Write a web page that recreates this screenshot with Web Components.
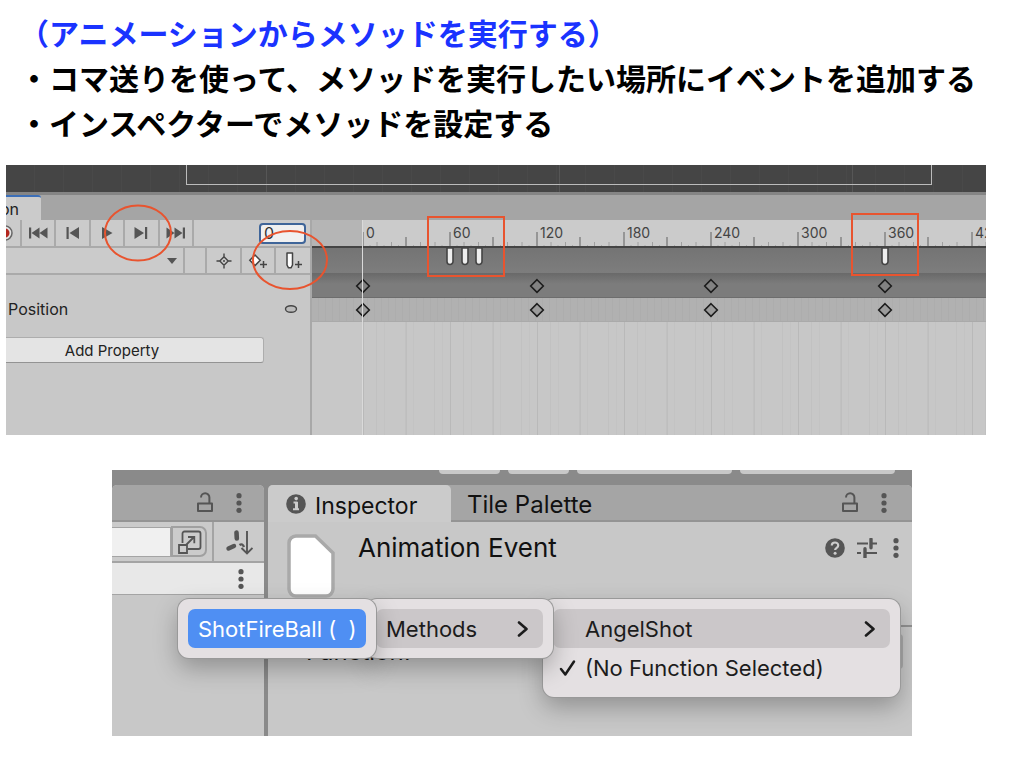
<!DOCTYPE html>
<html lang="ja">
<head>
<meta charset="utf-8">
<title>アニメーションからメソッドを実行する</title>
<style>
  body { margin: 0; background: #fff; color: #000; font-family: Inter, "Noto Sans CJK JP", sans-serif; }
</style>
</head>
<body>
<lesson-slide>
  <lesson-notes>
    <h1 slot="title">（アニメーションからメソッドを実行する）</h1>
    <p>・コマ送りを使って、メソッドを実行したい場所にイベントを追加する</p>
    <p>・インスペクターでメソッドを設定する</p>
  </lesson-notes>
  <animation-window></animation-window>
  <inspector-window></inspector-window>
</lesson-slide>

<script>
const define = (name, html, init) => {
  const template = document.createElement('template');
  template.innerHTML = html;
  customElements.define(name, class extends HTMLElement {
    constructor() {
      super();
      this.attachShadow({ mode: 'open' }).append(template.content.cloneNode(true));
    }
    connectedCallback() { if (init) init(this, this.shadowRoot); }
  });
};

/* Icon set: [width, height, markup] */
const G = '#555';
const icons = {
  record: [14, 18, '<circle cx="-1" cy="9" r="7" fill="#e4e4e4" stroke="#666" stroke-width="1.500"/><circle cx="-1" cy="9" r="4.500" fill="#b3261e"/>'],
  first: [20, 14, `<path d="M1 1.500h2.200v11H1zM3.500 7l8-5.500v11zM11.500 7l8-5.500v11z" fill="${G}"/>`],
  prev: [16, 14, `<path d="M1.500 1h2.200v12H1.500zM4.500 7l9.500-6v12z" fill="${G}"/>`],
  play: [14, 14, `<path d="M2 1l10.500 6L2 13z" fill="${G}"/>`],
  next: [16, 14, `<path d="M1.500 1L11 7l-9.500 6zM12 1h2.200v12H12z" fill="${G}"/>`],
  last: [20, 14, `<path d="M.5 1.500l8 5.500-8 5.500zM8.500 1.500l8 5.500-8 5.500zM16.800 1.500H19v11h-2.200z" fill="${G}"/>`],
  caret: [10, 6, `<path d="M0 0h10L5 6z" fill="${G}"/>`],
  target: [16, 16, '<path d="M8 3.800L12.200 8 8 12.200 3.800 8zM8 .5v4M8 11.500v4M.5 8h4M11.500 8h4" fill="none" stroke="#444" stroke-width="1.400"/><circle cx="8" cy="8" r="1" fill="#444"/>'],
  addkey: [20, 18, '<path d="M7 3l5.200 5.300L7 13.600 1.800 8.300z" fill="#fff" stroke="#444" stroke-width="1.500"/><path d="M15.500 9v7M12 12.500h7" fill="none" stroke="#444" stroke-width="1.500"/>'],
  addevent: [18, 18, '<path d="M3 1h5.500v12L7 15.800H4.500L3 13z" fill="#fff" stroke="#444" stroke-width="1.500" stroke-linejoin="round"/><path d="M14.500 9v7M11 12.500h7" fill="none" stroke="#444" stroke-width="1.500"/>'],
  curve: [14, 10, '<ellipse cx="7" cy="5" rx="5.500" ry="3.300" fill="#bbb" stroke="#444" stroke-width="1.400"/>'],
  diamond: [16, 16, '<path d="M8 1.700L14.300 8 8 14.300 1.700 8z" fill="#888" fill-opacity=".5" stroke="#1c1c1c" stroke-width="1.600"/>'],
  marker: [8, 18, '<path d="M1 0v13.500a3 3 0 0 0 6 0V0z" fill="#eee" stroke="#444" stroke-width="1.600"/>'],
  lock: [18, 22, `<path d="M2 11.500h14v7.500H2z" fill="none" stroke="${G}" stroke-width="2" stroke-linejoin="round"/><path d="M5 5.500a4.200 4.200 0 0 1 8.400 0v6" fill="none" stroke="${G}" stroke-width="2"/>`],
  kebab: [6, 20, `<g fill="${G}"><circle cx="3" cy="2.700" r="2.600"/><circle cx="3" cy="10" r="2.600"/><circle cx="3" cy="17.300" r="2.600"/></g>`],
  info: [20, 20, `<circle cx="10" cy="10" r="9.800" fill="${G}"/><path d="M7.500 8.500h3v6.500M7 15.200h6" fill="none" stroke="#ccc" stroke-width="2"/><path d="M10.500 8v7" stroke="#ccc" stroke-width="3"/><circle cx="10.200" cy="4.600" r="1.800" fill="#ccc"/>`],
  help: [20, 20, `<circle cx="10" cy="10" r="9.800" fill="${G}"/><path d="M6.800 7.600C6.800 3.400 13.300 3.600 13.200 7.400c0 2.500-3.100 2.300-3.100 4.700" fill="none" stroke="#ccc" stroke-width="2.200"/><circle cx="10.100" cy="15.200" r="1.500" fill="#ccc"/>`],
  sliders: [20, 20, `<path d="M0 5.500h11M14 5.500h6M0 15h4M8.500 15H20" stroke="${G}" stroke-width="1.800"/><path d="M14 1.200v8.600M8 10.800v8.600" stroke="${G}" stroke-width="3.400" stroke-linecap="round"/>`],
  window: [26, 26, `<path d="M6.500 14V4.500a2 2 0 0 1 2-2h14a2 2 0 0 1 2 2V18a2 2 0 0 1-2 2H12" fill="none" stroke="${G}" stroke-width="1.800"/><path d="M3 16h8v8H3zM10 16l8-8M12 8h6.300v6.300" fill="none" stroke="${G}" stroke-width="1.800"/>`],
  sort: [28, 26, `<path d="M11.500 3.500l.3 6" stroke="${G}" stroke-width="4.600" stroke-linecap="round"/><path d="M3.500 19.500l5.500-2.500" stroke="${G}" stroke-width="4.400" stroke-linecap="round"/><path d="M14.500 16q3-2 4.500 2" fill="none" stroke="${G}" stroke-width="2.400"/><path d="M22 2v22M16.500 19l5.500 5.500L27.500 19" fill="none" stroke="${G}" stroke-width="1.900"/>`],
  file: [48, 64, '<path d="M9 2h19.500L46 19v36a7 7 0 0 1-7 7H9a7 7 0 0 1-7-7V9a7 7 0 0 1 7-7z" fill="#fff" stroke="#a9a9a9" stroke-width="3.500"/>'],
  chevron: [12, 16, '<path d="M2 1.500L9.500 8 2 14.500" fill="none" stroke="#1c1c1c" stroke-width="2.600" stroke-linecap="round" stroke-linejoin="round"/>'],
  check: [18, 18, '<path d="M2 10l4.300 5.500L15 2.500" fill="none" stroke="#1c1c1c" stroke-width="2.500" stroke-linecap="round" stroke-linejoin="round"/>']
};
define('ui-icon', '', (host, root) => {
  const [w, h, body] = icons[host.getAttribute('name')];
  root.innerHTML = `<style>:host{display:block;flex:none;white-space:normal}svg{display:block}</style><svg width="${w}" height="${h}" viewBox="0 0 ${w} ${h}" aria-hidden="true">${body}</svg>`;
});

define('lesson-slide', `
<style>:host{display:flex;flex-direction:column;padding-top:10px}</style><slot></slot>`);

define('lesson-notes', `
<style>
  :host{display:block;padding-left:19px;font-family:"Noto Sans CJK JP",sans-serif;font-weight:700;white-space:nowrap}
  ::slotted(*){margin:0;font-size:30px;line-height:45px;font-weight:700}
  ::slotted(h1){color:#1a33ff}
</style>
<slot name="title"></slot><slot></slot>`);

define('icon-button', `
<style>
  :host{display:grid;min-width:0}
  button{display:grid;place-items:center;border:0;padding:0;margin:0;background:none;min-width:0;overflow:hidden;color:inherit}
  :host([divided]) button{border-right:2px solid #aaa}
</style>
<button type="button"></button>`, (host, root) => {
  const b = root.querySelector('button');
  b.setAttribute('aria-label', host.getAttribute('label'));
  b.innerHTML = `<ui-icon name="${host.getAttribute('icon')}"></ui-icon>`;
});

/* One 60-frame span of the ruler, with its ticks */
define('ruler-span', `
<style>
  :host{display:grid;width:87px;flex:none;color:#444;font-size:14px;line-height:26px}
  svg,span{grid-area:1/1}
  span{padding-left:4px}
</style>
<svg width="87" height="27" aria-hidden="true"><g stroke="#858585">
<path d="M1 12v15M44 17v10" stroke-width="1.500"/>
<path d="M15 22v5M29.500 22v5M58.500 22v5M73 22v5" stroke="#a0a0a0"/>
<path d="M8 25v2M22 25v2M36.500 25v2M51.500 25v2M65.500 25v2M80 25v2" stroke="#aaa"/></g></svg>
<span><slot></slot></span>`);

/* A track row: pins sit at their frame on the time axis */
define('time-track', `
<style>
  :host{display:block;position:relative;box-sizing:border-box;overflow:hidden}
  ui-icon{position:absolute;top:var(--pin-top,4px);left:calc(51px + var(--frame) * 87px / 60);transform:translateX(-50%)}
</style>`, (host, root) => {
  for (const f of host.getAttribute('frames').split(' ')) {
    const i = document.createElement('ui-icon');
    i.setAttribute('name', host.getAttribute('pin'));
    i.style.setProperty('--frame', f);
    root.append(i);
  }
});

define('animation-window', `
<style>
  :host{display:block;position:relative;margin:20px 38px 0 6px;height:270px;overflow:hidden;background:#c8c8c8;color:#222;font-size:16px}
  .scene{height:27px;overflow:hidden;background:
    repeating-linear-gradient(90deg,transparent 0 260px,#565656 260px 261px,transparent 261px 293px),
    repeating-linear-gradient(90deg,transparent 0 28px,#494949 28px 29px),#454545}
  .frame{height:19px;margin:0 54px 0 180px;border:1px solid #bbb;border-top:0}
  .tabs{height:25px;border-top:3px solid #858585;background:#a5a5a5;display:flex}
  .tab{box-sizing:border-box;width:35px;border-top:2px solid #3c6fb8;border-radius:0 3px 0 0;background:#cbcbcb;line-height:24px;display:flex;justify-content:flex-end;padding-right:22px;font-size:16px}
  .main{display:grid;grid-template-columns:306px 1fr;height:215px}
  .side{border-right:2px solid #a8a8a8;display:flex;flex-direction:column;min-width:0}
  .play{display:flex;height:26px;border-bottom:2px solid #aaa;background:#cbcbcb;align-items:center}
  .keys{display:grid;grid-template-columns:16px repeat(5,1fr);width:188px;height:26px}
  .play input{box-sizing:border-box;width:47px;height:21px;margin:0 4px 0 auto;border:2px solid #3f6599;border-radius:4px;background:#f0f0f0;padding:0 3px;font:16px Inter,sans-serif;color:#333}
  .clip{display:grid;grid-template-columns:1fr 22px 35px 34px 34px;height:25px;border-bottom:2px solid #aaa;background:#cbcbcb}
  .pick{display:grid;align-items:center;border-right:2px solid #aaa}
  .pick select{grid-area:1/1;appearance:none;border:0;background:none;height:25px}
  .pick ui-icon{grid-area:1/1;justify-self:end;margin-right:6px;pointer-events:none}
  .gap{border-right:2px solid #aaa}
  .prop{display:flex;align-items:center;justify-content:space-between;margin-top:22px;height:24px;padding:0 12px 0 2px;font-size:16px}
  .add{margin:16px 46px 0 -4px;height:26px;border:1px solid #adadad;border-bottom-color:#939393;border-radius:3px;background:#e4e4e4;color:#222;font:15px Inter,sans-serif;padding:0 42px 0 0}
  .time{position:relative;display:flex;flex-direction:column;min-width:0;overflow:hidden}
  .ruler{display:flex;height:26px;background:#cbcbcb;border-bottom:2px solid #444;overflow:hidden}
  .lead{width:50px;flex:none;background:#b5b5b5}
  .events{height:25px;--pin-top:0px;background:linear-gradient(#747474,#7d7d7d)}
  .summary{height:25px;--pin-top:5px;background:linear-gradient(#696969,#7c7c7c 45%);border-bottom:1px solid #6d6d6d}
  .position{height:24px;border-bottom:1px solid #aaa;background:repeating-linear-gradient(90deg,transparent 0 6px,#adadad 6px 7px),#b1b1b1}
  .sheet{flex:1;display:flex;background:#c8c8c8}
  .sheet i{flex:1;margin-left:51px;background:
    repeating-linear-gradient(90deg,#b9b9b9 0 1px,transparent 1px 87px),
    repeating-linear-gradient(90deg,transparent 0 43px,#bebebe 43px 44px,transparent 44px 87px),
    repeating-linear-gradient(90deg,#c7c7c7 0 13px,#c1c1c1 13px 14px,#c7c7c7 14px 21px,#c3c3c3 21px 22px,#c7c7c7 22px 29px)}
  .head{position:absolute;left:50px;top:0;bottom:0;width:1px;background:#dadada}
  .marks{position:absolute;inset:0;width:100%;height:100%;pointer-events:none}
</style>
<div class="scene"><div class="frame"></div></div>
<div class="tabs"><div class="tab">on</div></div>
<div class="main">
  <div class="side">
    <div class="play">
      <div class="keys">
        <icon-button divided icon="record" label="Record"></icon-button>
        <icon-button divided icon="first" label="First frame"></icon-button>
        <icon-button divided icon="prev" label="Previous frame"></icon-button>
        <icon-button divided icon="play" label="Play"></icon-button>
        <icon-button divided icon="next" label="Next frame"></icon-button>
        <icon-button divided icon="last" label="Last frame"></icon-button>
      </div>
      <input type="text" value="0" aria-label="Frame">
    </div>
    <div class="clip">
      <label class="pick"><select aria-label="Clip"><option></option></select><ui-icon name="caret"></ui-icon></label>
      <span class="gap"></span>
      <icon-button divided icon="target" label="Filter by selection"></icon-button>
      <icon-button divided icon="addkey" label="Add keyframe"></icon-button>
      <icon-button icon="addevent" label="Add event"></icon-button>
    </div>
    <div class="prop"><span>Position</span><ui-icon name="curve"></ui-icon></div>
    <button class="add" type="button">Add Property</button>
  </div>
  <div class="time">
    <div class="ruler"><span class="lead"></span>
      <ruler-span>0</ruler-span><ruler-span>60</ruler-span><ruler-span>120</ruler-span><ruler-span>180</ruler-span><ruler-span>240</ruler-span><ruler-span>300</ruler-span><ruler-span>360</ruler-span><ruler-span>420</ruler-span>
    </div>
    <time-track class="events" pin="marker" frames="60 70 80 360"></time-track>
    <time-track class="summary" pin="diamond" frames="0 120 240 360"></time-track>
    <time-track class="position" pin="diamond" frames="0 120 240 360"></time-track>
    <div class="sheet"><i></i></div>
    <div class="head"></div>
  </div>
</div>
<svg class="marks" aria-hidden="true"><g fill="none" stroke="#e8542f" stroke-width="2">
  <ellipse cx="132" cy="68" rx="33" ry="27.500"/><ellipse cx="284" cy="95" rx="37" ry="29"/>
  <rect x="422" y="52" width="76" height="59"/><rect x="846" y="49" width="66" height="61"/></g></svg>`);

define('menu-entry', `
<style>
  :host{display:grid;grid-template-columns:minmax(0,1fr)}
  button{display:flex;align-items:center;gap:6px;height:39px;border:0;border-radius:7px;margin:0;padding:0 14px 0 10px;background:none;color:#1c1c1c;font:22px Inter,sans-serif;text-align:left}
  :host([open]) button{background:#cbc7c9}
  :host([selected]) button{background:#4f8ff3;color:#fff;padding-right:0}
  :host([inset]) button{padding-left:32px}
  :host([checked]) button{padding-left:6px;gap:8px}
  span{flex:1;white-space:pre}
</style>
<button type="button"><span><slot></slot></span></button>`, (host, root) => {
  const add = (name, where) => {
    const i = document.createElement('ui-icon'); i.setAttribute('name', name);
    root.querySelector('button')[where](i);
  };
  if (host.hasAttribute('open')) add('chevron', 'append');
  if (host.hasAttribute('checked')) add('check', 'prepend');
});

define('popup-menu', `
<style>
  :host{display:block;box-sizing:border-box;padding:10px;border-radius:11px;background:#e4e0e2;
    box-shadow:0 0 0 1px #999,0 10px 24px rgba(0,0,0,.28)}
</style><slot></slot>`);

define('inspector-window', `
<style>
  :host{display:block;position:relative;margin:35px 112px 0;height:266px;overflow:hidden;background:#8a8a8a;color:#111;font-size:24px}
  .top{display:grid;grid-template-columns:61fr 61fr 155fr 155fr;gap:8px;height:4px;padding:0 17px 11px 327px}
  .top b{background:#c8c8c8;border-radius:0 0 4px 4px}
  .cols{display:grid;grid-template-columns:152px 1fr;gap:4px;height:251px}
  .bar{box-sizing:border-box;display:flex;align-items:center;height:37px;background:#a5a5a5;border-bottom:2px solid #949494;border-radius:5px 5px 0 0}
  .pane{background:#c8c8c8;border-radius:5px 5px 0 0;min-width:0}
  .end{margin-left:auto;display:flex;align-items:center;gap:22px;height:34px}
  .left .end{margin-right:22px}
  .right .end{margin-right:25px}
  .search{display:flex;align-items:center;height:39px;border-bottom:2px solid #a4a4a4;background:#cbcbcb}
  .search input{box-sizing:border-box;flex:1;min-width:0;width:0;height:30px;border:1px solid #a4a4a4;border-left:0;background:#f0f0f0}
  .expand{box-sizing:border-box;width:36px;height:31px;border:2px solid #a0a0a0;border-radius:0 7px 7px 0}
  .sort{width:50px;height:39px;margin-left:5px;border-left:2px solid #a4a4a4}
  .row{display:flex;justify-content:flex-end;align-items:center;height:31px;padding-right:20px;border-bottom:1px solid #a4a4a4;background:#e8e8e8}
  .tab{box-sizing:border-box;display:flex;align-items:center;gap:9px;width:183px;height:37px;padding-left:18px;margin-bottom:-2px;background:#cbcbcb;border-radius:5px 5px 0 0}
  .other{padding-left:16px;font-size:24px}
  .tab{font-size:23px}
  .tab span,.other{line-height:34px;padding-top:4px}
  .title{display:flex;align-items:flex-start;padding:12px 13px 0 19px}
  .title h2{margin:0 0 0 23px;font-size:26px;line-height:28px;font-weight:400}
  .tools{margin-left:auto;display:flex;align-items:center;gap:12px;height:28px}
  .tools ui-icon:last-child{margin-left:4px}
  .rule{height:27px;border-bottom:2px solid #929292}
  .field{display:flex;justify-content:space-between;padding:7px 9px 0 38px;height:35px}
  .field input{width:200px;box-sizing:border-box;border:2px solid #aaa;border-radius:4px;background:#c8c8c8}
  .field label{line-height:36px}
  .menus{position:absolute;left:66px;top:129px;display:flex;align-items:flex-start}
  .menus popup-menu{position:relative}
  .menus popup-menu+popup-menu{margin-left:-10px}
  .a{width:198px;z-index:3}.b{width:187px;z-index:2}.c{width:357px;z-index:1}
</style>
<div class="top"><b></b><b></b><b></b><b></b></div>
<div class="cols">
  <div class="pane left">
    <div class="bar"><div class="end"><ui-icon name="lock"></ui-icon><ui-icon name="kebab"></ui-icon></div></div>
    <div class="search"><input type="search" aria-label="Search"><icon-button class="expand" icon="window" label="Open search"></icon-button><icon-button class="sort" icon="sort" label="Sort"></icon-button></div>
    <div class="row"><ui-icon name="kebab"></ui-icon></div>
  </div>
  <div class="pane right">
    <div class="bar"><div class="tab"><ui-icon name="info"></ui-icon><span>Inspector</span></div><div class="other">Tile Palette</div>
      <div class="end"><ui-icon name="lock"></ui-icon><ui-icon name="kebab"></ui-icon></div></div>
    <div class="title"><ui-icon name="file"></ui-icon><h2>Animation Event</h2>
      <div class="tools"><ui-icon name="help"></ui-icon><ui-icon name="sliders"></ui-icon><ui-icon name="kebab"></ui-icon></div></div>
    <div class="rule"></div>
    <div class="field"><label for="fn">Function:</label><input id="fn" type="text"></div>
  </div>
</div>
<div class="menus">
  <popup-menu class="a"><menu-entry selected>ShotFireBall (  )</menu-entry></popup-menu>
  <popup-menu class="b"><menu-entry open>Methods</menu-entry></popup-menu>
  <popup-menu class="c"><menu-entry open inset>AngelShot</menu-entry><menu-entry checked>(No Function Selected)</menu-entry></popup-menu>
</div>`);
</script>
</body>
</html>
